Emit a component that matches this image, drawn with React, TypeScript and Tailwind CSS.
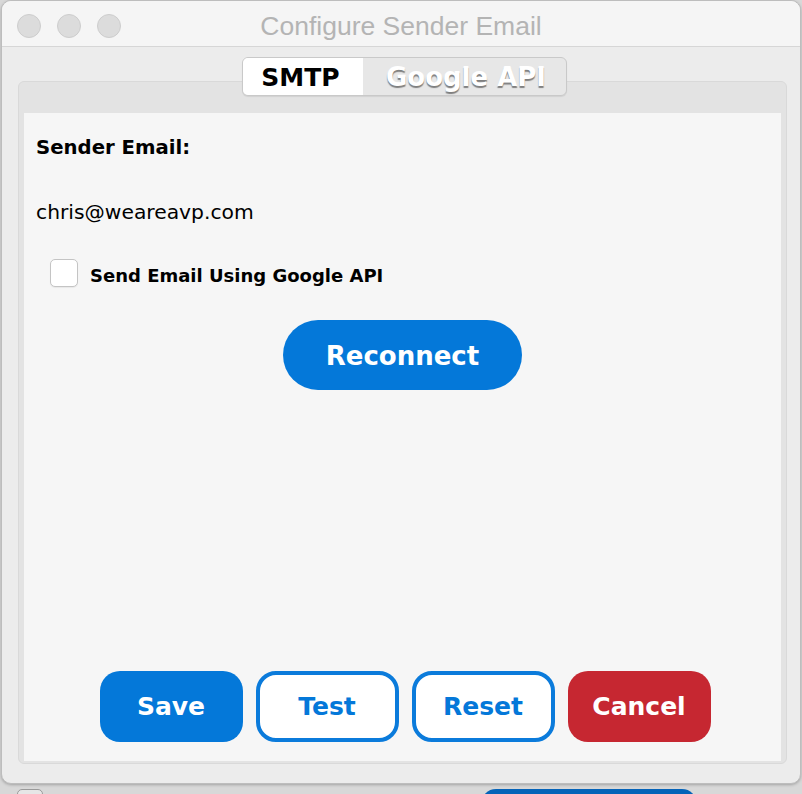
import React from "react";

const ui = { fontFamily: '"DejaVu Sans", Verdana, sans-serif' };

function TrafficLight() {
  return <span className="block w-[24px] h-[24px] rounded-full bg-[#dcdcdc] border border-[#cdcdcd]" />;
}

function ActionButton({ label, variant }: { label: string; variant: "primary" | "outline" | "danger" }) {
  const base = "w-[143px] h-[71px] rounded-[20px] flex items-center justify-center text-[25px] font-bold";
  const styles = {
    primary: "bg-[#0478d9] text-white",
    outline: "bg-white text-[#0478d9] border-[4px] border-[#0b7bdb]",
    danger: "bg-[#c62731] text-white",
  };
  return <button className={`${base} ${styles[variant]}`}>{label}</button>;
}

export default function App() {
  return (
    <div className="w-[802px] h-[794px] overflow-hidden bg-[#d8d8d8] flex flex-col" style={ui}>
      {/* Window */}
      <div className="ml-[1px] w-[800px] h-[784px] shrink-0 rounded-[10px] bg-[#ececec] border border-[#bdbdbd] shadow-[0_1px_3px_rgba(0,0,0,0.25)] flex flex-col overflow-hidden">
        {/* Title bar */}
        <div className="h-[46px] shrink-0 bg-[#f5f5f5] border-b border-[#d6d6d6] grid grid-cols-[1fr_auto_1fr] items-center pt-[4px]">
          <div className="flex items-center gap-[16px] pl-[15px]">
            <TrafficLight />
            <TrafficLight />
            <TrafficLight />
          </div>
          <div
            className="text-[26.5px] text-[#b4b4b4] leading-none pt-[2px]"
            style={{ fontFamily: '"Liberation Sans", Arial, sans-serif' }}
          >
            Configure Sender Email
          </div>
          <div />
        </div>

        {/* Body */}
        <div className="flex-1 flex flex-col pl-[16px] pr-[13px] pb-[19px]">
          {/* Segmented tabs */}
          <div className="relative z-10 self-center mt-[10px] -mb-[15px] ml-[3px] w-[325px] h-[39px] flex rounded-[6px] border border-[#c9c9c9] bg-[#e7e7e7] overflow-hidden shadow-[0_1px_1px_rgba(0,0,0,0.08)]">
            <div className="w-[120px] bg-white flex items-center justify-center text-[25px] font-bold text-black pr-[4px] pt-[2px]">
              SMTP
            </div>
            <div className="flex-1 flex items-center justify-center text-[26px] font-bold text-white [text-shadow:0_2px_1px_rgba(0,0,0,0.45)] pl-[4px] pt-[2px]">
              Google API
            </div>
          </div>

          {/* Tab pane */}
          <div className="flex-1 flex flex-col rounded-[6px] border border-[#d9d9d9] bg-[#e3e3e3] pt-[31px] px-[5px] pb-[2px]">
            <div className="flex-1 flex flex-col bg-[#f6f6f6] pl-[12px]">
              <div className="mt-[23px] h-[24px] leading-[24px] text-[19.7px] font-bold text-black">Sender Email:</div>
              <div className="mt-[40px] h-[24px] leading-[24px] text-[20.3px] text-black">chris@weareavp.com</div>

              <label className="mt-[35px] ml-[14px] h-[28px] flex items-center gap-[12px]">
                <span className="w-[28px] h-[28px] shrink-0 rounded-[5px] bg-white border border-[#c4c4c4] shadow-[0_1px_1px_rgba(0,0,0,0.06)]" />
                <span className="text-[18px] font-bold text-black pt-[4px]">Send Email Using Google API</span>
              </label>

              <div className="mt-[33px] flex justify-center pr-[12px]">
                <button className="w-[239px] h-[70px] rounded-full bg-[#0478d9] text-white text-[26px] font-bold pt-[2px]">
                  Reconnect
                </button>
              </div>

              <div className="mt-auto mb-[19px] flex justify-center gap-[13px] pr-[7px]">
                <ActionButton label="Save" variant="primary" />
                <ActionButton label="Test" variant="outline" />
                <ActionButton label="Reset" variant="outline" />
                <ActionButton label="Cancel" variant="danger" />
              </div>
            </div>
          </div>
        </div>
      </div>

      {/* Desktop behind the window */}
      <div className="flex items-start pt-[5px]">
        <span className="ml-[17px] w-[26px] h-[20px] rounded-[5px] border border-[#9a9a9a] bg-[#e6e6e6]" />
        <span className="ml-[438px] w-[216px] h-[30px] rounded-full bg-[#0563b8]" />
      </div>
    </div>
  );
}
